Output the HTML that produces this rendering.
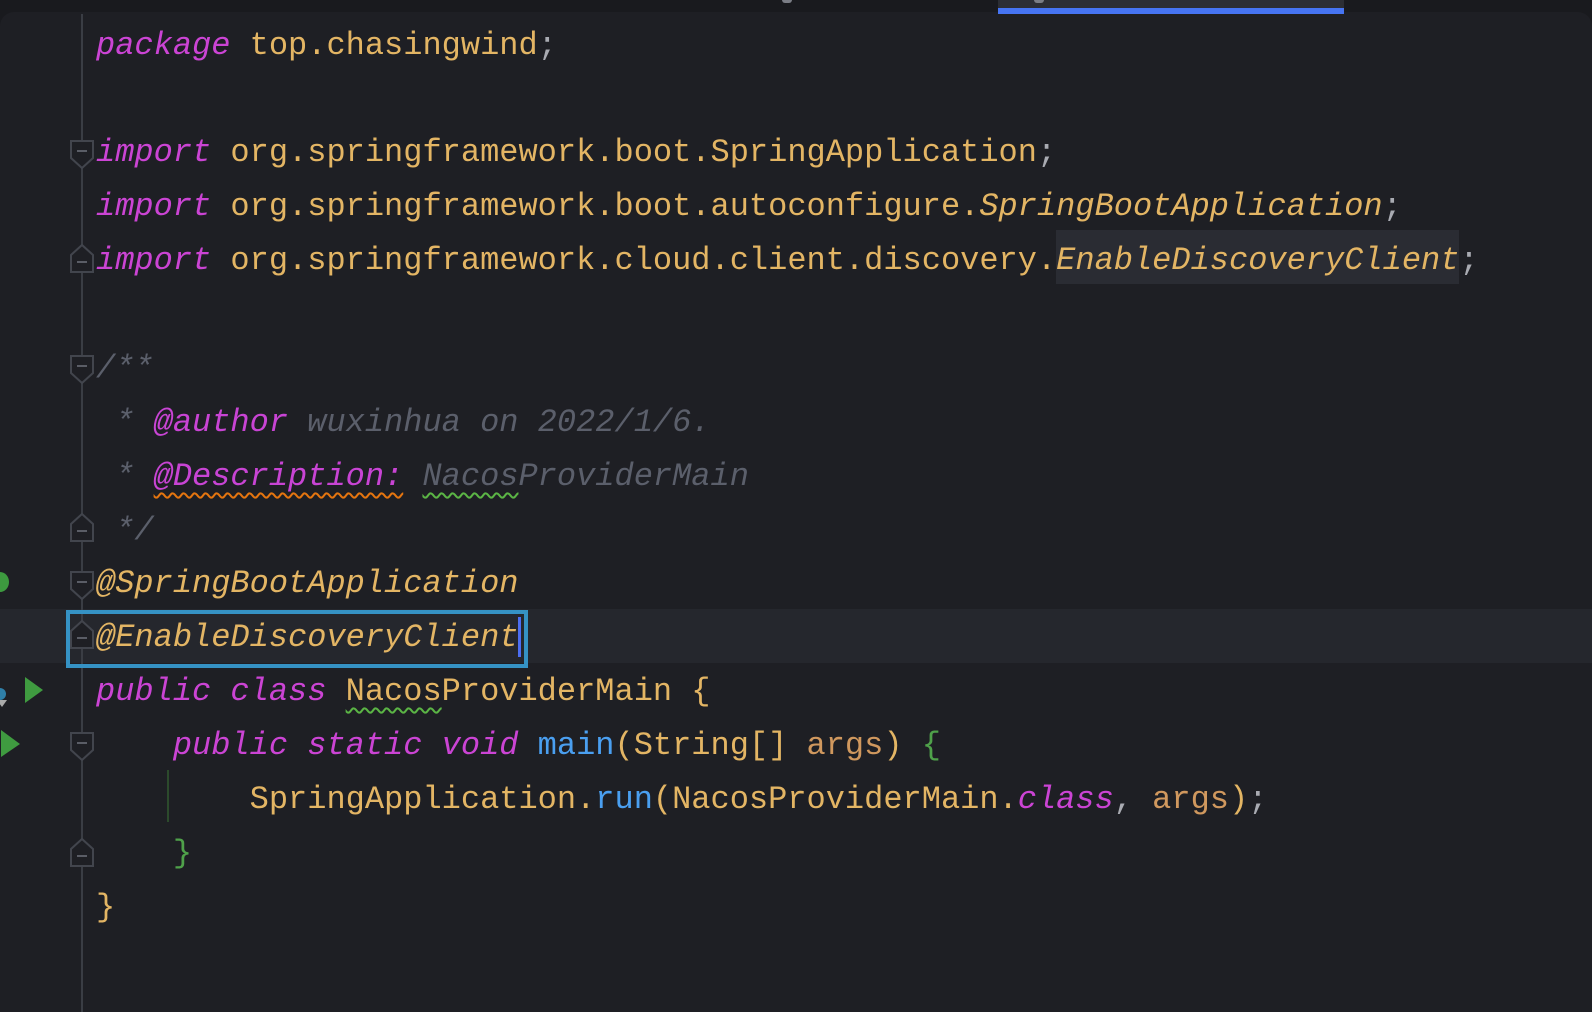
<!DOCTYPE html>
<html><head><meta charset="utf-8"><style>
html,body{margin:0;padding:0;}
body{width:1592px;height:1012px;background:#191a1e;position:relative;overflow:hidden;font-family:"Liberation Mono",monospace;}
#ed{position:absolute;left:0;top:12px;width:1592px;height:1000px;background:#1e1f24;border-top-left-radius:14px;border-top-right-radius:14px;}
.l{position:absolute;left:96px;height:54px;line-height:54px;font-size:32px;white-space:pre;color:#e3b564;margin-top:2px}
.k{color:#cb44d4;font-style:italic}
.a{color:#e3b564;font-style:italic}
.c{color:#5b5f6b;font-style:italic}
.ct{color:#c844d4;font-style:italic}
.p{color:#a9abb2}
.m{color:#4a9ff0}
.o{color:#d0985e}
.g{color:#4fa14a}
.wo{text-decoration:underline wavy #e5750f;text-decoration-thickness:2px;text-underline-offset:7px}
.wg{text-decoration:underline wavy #5bb545;text-decoration-thickness:2px;text-underline-offset:7px}
</style></head><body>
<div id="ed"></div>
<div style="position:absolute;left:998px;top:0;width:346px;height:9px;background:#2c2e34"></div>
<div style="position:absolute;left:998px;top:8px;width:346px;height:6px;background:#4674f2"></div>
<div style="position:absolute;left:782px;top:0;width:10px;height:3px;background:#7a7d85;border-radius:0 0 3px 3px"></div>
<div style="position:absolute;left:1034px;top:0;width:10px;height:3px;background:#7a7d85;border-radius:0 0 3px 3px"></div>
<div style="position:absolute;left:0;top:609px;width:1592px;height:54px;background:#25272d"></div>
<div style="position:absolute;left:1056px;top:230px;width:403px;height:54px;background:#2a2c33"></div>
<svg style="position:absolute;left:0;top:0" width="200" height="1012">
<line x1="82" y1="14" x2="82" y2="1012" stroke="#3a3d44" stroke-width="2"/>
<line x1="168" y1="770" x2="168" y2="822" stroke="#2c4a2c" stroke-width="2"/>
<g fill="#1e1f24" stroke="#42454d" stroke-width="2">
<path d="M71,141 H93 V158 L82,168 L71,158 Z"/>
<path d="M71,356 H93 V373 L82,383 L71,373 Z"/>
<path d="M71,572 H93 V589 L82,599 L71,589 Z"/>
<path d="M71,733 H93 V750 L82,760 L71,750 Z"/>
<path d="M71,272 H93 V255 L82,245 L71,255 Z"/>
<path d="M71,541 H93 V524 L82,514 L71,524 Z"/>
<path d="M71,648 H93 V631 L82,621 L71,631 Z"/>
<path d="M71,866 H93 V849 L82,839 L71,849 Z"/>
</g>
<g stroke="#5a5d66" stroke-width="2">
<line x1="77" y1="151" x2="87" y2="151"/><line x1="77" y1="366" x2="87" y2="366"/>
<line x1="77" y1="582" x2="87" y2="582"/><line x1="77" y1="743" x2="87" y2="743"/>
<line x1="77" y1="262" x2="87" y2="262"/><line x1="77" y1="531" x2="87" y2="531"/>
<line x1="77" y1="638" x2="87" y2="638"/><line x1="77" y1="856" x2="87" y2="856"/>
</g>
<path d="M0,572 A9,10 0 0 1 0,592 Z" fill="#3d9a3f"/>
<path d="M25,677 L43,690 L25,703 Z" fill="#3f9b40"/>
<path d="M1,730 L20,744 L1,757 Z" fill="#3f9b40"/>
<circle cx="0" cy="694" r="6" fill="#2f7fa8"/>
<path d="M-3,700 L7,700 L2,707 Z" fill="#aaa"/>
</svg>
<div style="position:absolute;left:66px;top:610px;width:454px;height:50px;border:4px solid #3592c4"></div>
<div style="position:absolute;left:518px;top:617px;width:3px;height:40px;background:#4c6ef2"></div>

<div class="l" style="top:17px"><span class="k">package</span> top.chasingwind<span class="p">;</span></div>
<div class="l" style="top:124px"><span class="k">import</span> org.springframework.boot.SpringApplication<span class="p">;</span></div>
<div class="l" style="top:178px"><span class="k">import</span> org.springframework.boot.autoconfigure.<span class="a">SpringBootApplication</span><span class="p">;</span></div>
<div class="l" style="top:232px"><span class="k">import</span> org.springframework.cloud.client.discovery.<span class="a">EnableDiscoveryClient</span><span class="p">;</span></div>
<div class="l c" style="top:340px">/**</div>
<div class="l c" style="top:394px"> * <span class="ct">@author</span> wuxinhua on 2022/1/6.</div>
<div class="l c" style="top:448px"> * <span class="ct wo">@Description:</span> <span class="wg">Nacos</span>ProviderMain</div>
<div class="l c" style="top:502px"> */</div>
<div class="l a" style="top:555px">@SpringBootApplication</div>
<div class="l a" style="top:609px">@EnableDiscoveryClient</div>
<div class="l" style="top:663px"><span class="k">public</span> <span class="k">class</span> <span class="wg">Nacos</span>ProviderMain {</div>
<div class="l" style="top:717px">    <span class="k">public</span> <span class="k">static</span> <span class="k">void</span> <span class="m">main</span>(String[] <span class="o">args</span>) <span class="g">{</span></div>
<div class="l" style="top:771px">        SpringApplication.<span class="m">run</span>(NacosProviderMain.<span class="k">class</span><span class="p">,</span> <span class="o">args</span>)<span class="p">;</span></div>
<div class="l" style="top:825px">    <span class="g">}</span></div>
<div class="l" style="top:879px">}</div>
</body></html>
